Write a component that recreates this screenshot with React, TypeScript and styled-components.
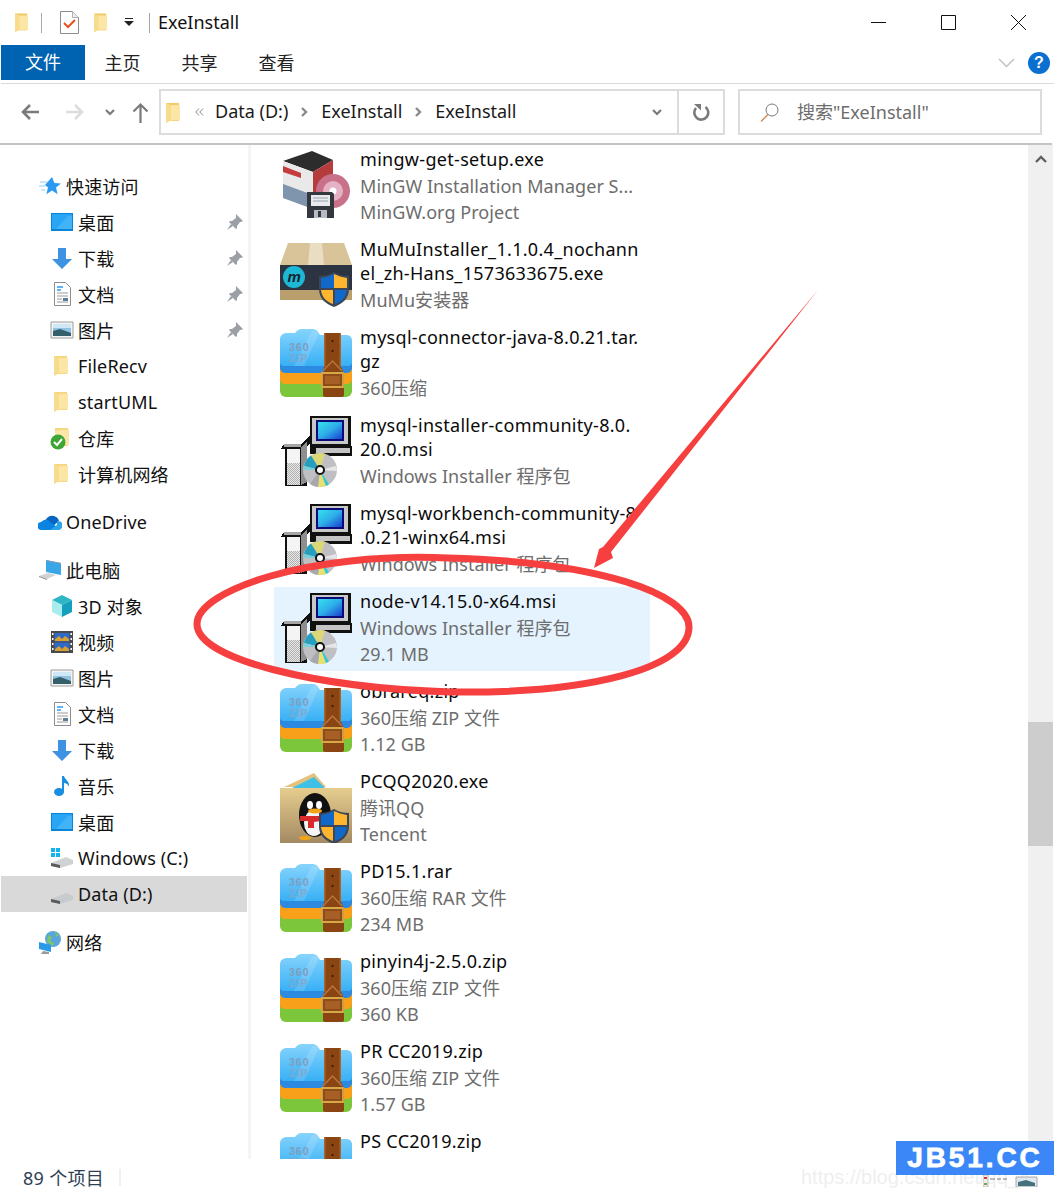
import React, { FC } from "react";
import styled, { createGlobalStyle } from "styled-components";

const GlobalStyle = createGlobalStyle`
  html, body {
    margin: 0;
    padding: 0;
    background: #fff;
  }
  body {
    font-family: "Noto Sans", "Noto Sans CJK SC", sans-serif;
    color: #111;
  }
`;

const Window = styled.div`
  position: relative;
  width: 1054px;
  height: 1195px;
  display: flex;
  flex-direction: column;
  overflow: hidden;
  background: #fff;
`;

/* ---------- title bar ---------- */

const TitleBar = styled.div`
  height: 45px;
  flex: none;
  display: flex;
  align-items: center;
  padding-left: 15px;
`;

const TitleIcon = styled.span<{ $gap: number }>`
  display: flex;
  margin-right: ${(p) => p.$gap}px;
`;

const TitleSep = styled.span<{ $gap: number }>`
  width: 1px;
  height: 20px;
  background: #a8a8a8;
  margin-right: ${(p) => p.$gap}px;
`;

const Title = styled.span`
  font-size: 18px;
  line-height: 45px;
  margin-right: auto;
`;

const WinButtons = styled.div`
  display: flex;
  align-items: center;
  padding-right: 28px;
  gap: 55px;
`;

/* ---------- ribbon ---------- */

const Ribbon = styled.div`
  height: 38px;
  flex: none;
  margin-left: 1px;
  display: flex;
  align-items: flex-start;
  border-bottom: 1px solid #dadada;
`;

const FileTab = styled.div`
  width: 84px;
  height: 35px;
  margin-right: -1px;
  background: #0063b1;
  color: #fff;
  font-size: 18px;
  line-height: 34px;
  text-align: center;
`;

const RibbonTab = styled.div`
  width: 77px;
  height: 35px;
  font-size: 18px;
  line-height: 36px;
  text-align: center;
  color: #222;
`;

const RibbonRight = styled.div`
  margin-left: auto;
  height: 36px;
  padding-right: 4px;
  display: flex;
  align-items: center;
  gap: 13px;
  box-sizing: border-box;
`;

const Help = styled.div`
  width: 22px;
  height: 22px;
  border-radius: 50%;
  background: #0a6fd0;
  color: #fff;
  font: bold 16px/22px "Liberation Sans", sans-serif;
  text-align: center;
`;

/* ---------- address bar ---------- */

const NavBar = styled.div`
  height: 61px;
  flex: none;
  margin: 0 2px 0 0;
  box-sizing: border-box;
  display: flex;
  align-items: center;
  border-bottom: 2px solid #c4c4c4;
  padding-bottom: 3px;
`;

const NavButtons = styled.div`
  width: 159px;
  flex: none;
  display: flex;
  align-items: center;
  padding-left: 20px;
  box-sizing: border-box;
`;

const NavGap = styled.span<{ $w: number }>`
  width: ${(p) => p.$w}px;
`;

const AddressBox = styled.div`
  width: 566px;
  height: 46px;
  flex: none;
  box-sizing: border-box;
  border: 2px solid #dcdcdc;
  display: flex;
  align-items: center;
  padding-left: 5px;
  font-size: 18px;
`;

const CrumbMore = styled.svg`
  margin: 0 11px 0 14px;
`;

const Crumb = styled.span`
  color: #1a1a1a;
  margin-bottom: 2px;
`;

const CrumbArrow = styled.span`
  display: flex;
  margin: 0 13px;
`;

const AddressEnd = styled.div`
  margin-left: auto;
  display: flex;
  align-items: center;
  height: 100%;
`;

const RefreshCell = styled.div`
  width: 46px;
  height: 100%;
  margin-left: 13px;
  border-left: 2px solid #dcdcdc;
  box-sizing: border-box;
  display: flex;
  align-items: center;
  justify-content: center;
`;

const SearchBox = styled.div`
  width: 304px;
  height: 46px;
  flex: none;
  margin-left: 13px;
  box-sizing: border-box;
  border: 2px solid #dcdcdc;
  display: flex;
  align-items: center;
  padding-left: 20px;
  gap: 18px;
  font-size: 18px;
  color: #6d6d6d;
`;

const SearchText = styled.span`
  margin-bottom: 3px;
`;

/* ---------- main area ---------- */

const Body = styled.div`
  flex: 1;
  min-height: 0;
  display: flex;
`;

const Sidebar = styled.nav`
  width: 251px;
  flex: none;
  box-sizing: border-box;
  padding: 23px 0 0 1px;
  border-right: 3px solid #f5f5f5;
`;

const NavGroup = styled.div`
  margin-bottom: 12px;
`;

const NavItem = styled.div<{ $sub?: boolean; $selected?: boolean }>`
  width: 246px;
  height: 36px;
  box-sizing: border-box;
  display: flex;
  align-items: center;
  padding: 0 4px 0 ${(p) => (p.$sub ? 49 : 37)}px;
  gap: 4px;
  font-size: 18px;
  letter-spacing: 0.15px;
  white-space: nowrap;
  background: ${(p) => (p.$selected ? "#d9d9d9" : "transparent")};
`;

const NavIconBox = styled.span`
  width: 24px;
  height: 24px;
  flex: none;
  display: flex;
`;

const PinBox = styled.span`
  display: flex;
  margin-left: auto;
`;

const FileList = styled.div`
  flex: 1;
  min-width: 0;
  overflow: hidden;
  padding-left: 23px;
  display: flex;
  flex-direction: column;
  gap: 6px;
`;

const FileRow = styled.div<{ $selected?: boolean }>`
  width: 376px;
  min-height: 82px;
  flex: none;
  box-sizing: border-box;
  display: flex;
  align-items: center;
  gap: 8px;
  padding: 2px 0 4px 6px;
  background: ${(p) => (p.$selected ? "#e5f3ff" : "transparent")};
`;

const FileThumb = styled.span`
  width: 72px;
  height: 72px;
  flex: none;
  display: flex;
  align-items: center;
  justify-content: center;
`;

const FileText = styled.div`
  min-width: 0;
  align-self: flex-start;
  white-space: nowrap;
`;

const FileName = styled.div`
  font-size: 18px;
  line-height: 24px;
  letter-spacing: 0.3px;
  color: #0a0a0a;
`;

const FileMeta = styled.div`
  font-size: 18px;
  line-height: 26px;
  letter-spacing: 0.05px;
  color: #6d6d6d;
  ${FileName} + & {
    margin-top: 2px;
  }
`;

const ScrollTrack = styled.div`
  width: 25px;
  flex: none;
  margin-right: 1px;
  background: #f0f0f0;
  display: flex;
  flex-direction: column;
  align-items: center;
  padding-top: 10px;
  box-sizing: border-box;
`;

const ScrollThumb = styled.div`
  width: 25px;
  height: 124px;
  margin-top: 559px;
  background: #cdcdcd;
`;

const StatusBar = styled.div`
  height: 36px;
  flex: none;
  display: flex;
  align-items: center;
  padding-left: 23px;
  font-size: 18px;
  letter-spacing: 0.3px;
  color: #2e3f55;
`;

const StatusSep = styled.span`
  width: 2px;
  height: 17px;
  margin-left: 15px;
  background: #f0f0f0;
`;

/* ---------- things lying over the window ---------- */

const Annotation = styled.svg`
  position: absolute;
  left: 0;
  top: 0;
  pointer-events: none;
`;

const Watermark = styled.div`
  position: absolute;
  left: 801px;
  top: 1164px;
  font: 20px/26px "Liberation Sans", sans-serif;
  color: #efefef;
  white-space: nowrap;
`;

const WatermarkIcons = styled.svg`
  position: absolute;
  left: 983px;
  top: 1175px;
`;

const Badge = styled.div`
  position: absolute;
  left: 896px;
  top: 1141px;
  width: 158px;
  height: 34px;
  background: #3b87f7;
  color: #fff;
  font: bold 28px/34px "Liberation Sans", sans-serif;
  letter-spacing: 2.9px;
  text-align: center;
  -webkit-text-stroke: 0.8px #fff;
`;

/* ---------- small drawings ---------- */

const FolderIcon: FC<{ w?: number; h?: number }> = ({ w = 15, h = 21 }) => (
  <svg width={w} height={h} viewBox="0 0 15 21">
    <path d="M0 1h13v18H0z" fill="#f5d77f" />
    <path d="M0 1h13v3H0z" fill="#f0c968" />
    <path d="M0 4l5-1h9v15H5l-5 3z" fill="#fbe6a5" />
    <path d="M0 1v20l5-3V3z" fill="#f7dc8c" />
  </svg>
);

const ChecklistIcon: FC = () => (
  <svg width="19" height="23" viewBox="0 0 19 23">
    <path d="M.5.5h12l6 6v16H.5z" fill="#fff" stroke="#8c8c8c" />
    <path d="M12.5.5v6h6" fill="#eee" stroke="#b0b0b0" />
    <path d="M4 12l4 4 7-7" fill="none" stroke="#e8501e" strokeWidth="2" />
  </svg>
);

const DropIcon: FC = () => (
  <svg width="10" height="9" viewBox="0 0 10 9">
    <path d="M1 .5h8" stroke="#222" />
    <path d="M0 3h10L5 8z" fill="#222" />
  </svg>
);

const ArrowIcon: FC<{ dir: "left" | "right"; color: string }> = ({ dir, color }) => (
  <svg width="20" height="18" viewBox="0 0 20 18">
    <path
      d={dir === "left" ? "M19 9H3M10 2L3 9l7 7" : "M1 9h16M10 2l7 7-7 7"}
      fill="none"
      stroke={color}
      strokeWidth="2.6"
    />
  </svg>
);

const UpIcon: FC = () => (
  <svg width="17" height="21" viewBox="0 0 17 21">
    <path d="M8.5 21V3M1.5 9.5l7-7 7 7" fill="none" stroke="#7a7a7a" strokeWidth="2.2" />
  </svg>
);

const SmallChevron: FC<{ color?: string; w?: number }> = ({ color = "#7a7a7a", w = 10 }) => (
  <svg width={w} height="7" viewBox="0 0 10 7">
    <path d="M1 1l4 4 4-4" fill="none" stroke={color} strokeWidth="2.2" />
  </svg>
);

const CrumbChevron: FC = () => (
  <svg width="7" height="10" viewBox="0 0 7 10">
    <path d="M1 1l4 4-4 4" fill="none" stroke="#8a8a8a" strokeWidth="2.4" />
  </svg>
);

const PinIcon: FC = () => (
  <svg width="16" height="17" viewBox="0 0 16 17">
    <path d="M9 0l7 7-2 1-1 0-3 4v2l-1 1-7-7 1-1h2l4-3V1z" fill="#9aa0a6" />
    <path d="M4 10L0 16l6-4z" fill="#9aa0a6" />
  </svg>
);

type NavIconName =
  | "star" | "desktop" | "down" | "doc" | "pic" | "folder" | "repo" | "cloud"
  | "pc" | "cube" | "video" | "music" | "winDrive" | "drive" | "net";

const NavIcon: FC<{ name: NavIconName }> = ({ name }) => {
  const shapes: Record<NavIconName, React.ReactNode> = {
    star: (
      <>
        <path d="M14 3l2.4 6 6.6.4-5 4.2 1.6 6.6-5.600-3.600-5.600 3.600 1.600-6.600-3-2.600z" fill="#2b9af3" />
        <path d="M2 8h7M1 12h6M3 16h4" stroke="#8fd0fa" strokeWidth="1.2" />
      </>
    ),
    desktop: (
      <>
        <path d="M1 3h22v18H1z" fill="#0a84d8" />
        <path d="M2 4h20v15H2z" fill="#2ba6f7" />
        <path d="M6 19L18 6h4v13z" fill="#53bcfa" opacity=".6" />
      </>
    ),
    down: <path d="M8 2h8v11h6l-10 10L2 13h6z" fill="#3e92e2" />,
    doc: (
      <>
        <path d="M4.5.5h11l5 5v18h-16z" fill="#fff" stroke="#8c8c8c" />
        <path d="M7 5h6M7 8h4" stroke="#2b9af3" strokeWidth="1.4" />
        <path d="M7 11h11M7 14h11M7 17h5M7 20h11" stroke="#9a9a9a" />
        <path d="M13 16h5v3h-5z" fill="#5a7f9a" />
      </>
    ),
    pic: (
      <>
        <path d="M1 4h22v16H1z" fill="#f4f4f4" stroke="#9c9c9c" />
        <path d="M3 6h18v12H3z" fill="#8fc3e0" />
        <path d="M3 13l7-2 11 4v3H3z" fill="#355f6a" />
        <path d="M3 6h18v4H3z" fill="#cfe8f5" />
      </>
    ),
    folder: (
      <g transform="translate(4 1)">
        <path d="M0 1h13v18H0z" fill="#f5d77f" />
        <path d="M0 4l5-1h9v15H5l-5 3z" fill="#fbe6a5" />
        <path d="M0 1v20l5-3V3z" fill="#f7dc8c" />
      </g>
    ),
    repo: (
      <>
        <g transform="translate(5 1)">
          <path d="M0 1h13v18H0z" fill="#f5d77f" />
          <path d="M0 4l5-1h9v15H5l-5 3z" fill="#fbe6a5" />
        </g>
        <circle cx="8" cy="16" r="7.5" fill="#3fa535" />
        <path d="M4 16l3 3 5-6" fill="none" stroke="#fff" strokeWidth="2" />
      </>
    ),
    cloud: (
      <>
        <path d="M9 8a7 7 0 0 1 12 3l-7 6-8-5z" fill="#0a64c4" />
        <path d="M6 10a5 5 0 0 1 5 1l8 6-5 3H4a4 4 0 0 1-1-8z" fill="#0a84e0" />
        <path d="M19 11a4 4 0 0 1 2 9h-9l7-5z" fill="#2aa4ea" />
      </>
    ),
    pc: (
      <>
        <path d="M8 2l15 3v12l-15-3z" fill="#3aa6ea" />
        <path d="M8 2l15 3v1L8 3z" fill="#8a9aa6" />
        <path d="M1 18l9-3 8 2-9 4z" fill="#cfd3d6" />
        <path d="M1 18l8 3v1l-8-3z" fill="#8e9296" />
      </>
    ),
    cube: (
      <>
        <path d="M12 1l10 5-10 5L2 6z" fill="#2fb6c6" />
        <path d="M2 6l10 5v12L2 18z" fill="#a8ecee" />
        <path d="M22 6l-10 5v12l10-5z" fill="#14a0bc" />
      </>
    ),
    video: (
      <>
        <path d="M1 1h22v22H1z" fill="#4a4a4a" />
        <path d="M4.5 3h15v8.500h-15zM4.500 12.500h15V21h-15z" fill="#2f6ac8" />
        <path d="M5 9l4-3 3 3 3-3 4 3v2H5zM5 19l4-3 3 3 3-3 4 3v2H5z" fill="#d8a030" />
        <path d="M2 3h1.500v2H2zM2 8h1.500v2H2zM2 13h1.500v2H2zM2 18h1.500v2H2zM20.500 3H22v2h-1.500zM20.500 8H22v2h-1.500zM20.500 13H22v2h-1.500zM20.500 18H22v2h-1.500z" fill="#fff" />
      </>
    ),
    music: (
      <>
        <ellipse cx="9" cy="18" rx="5" ry="4" fill="#1a8ee0" />
        <path d="M12 2h2c1 4 6 5 5 11-1-3-3-4-5-4v9h-2z" fill="#1a8ee0" />
      </>
    ),
    winDrive: (
      <>
        <path d="M1 2h4v4H1zM6 2h4v4H6zM1 7h4v4H1zM6 7h4v4H6z" fill="#12b4f0" />
        <path d="M1 17l15-6 7 3v4l-13 4-9-2z" fill="#d0d3d6" />
        <path d="M1 17l9 2v3l-9-2z" fill="#5a5a5a" />
      </>
    ),
    drive: (
      <>
        <path d="M1 17l15-6 7 3v4l-13 4-9-2z" fill="#c8cbce" />
        <path d="M1 17l9 2v3l-9-2z" fill="#5a5a5a" />
      </>
    ),
    net: (
      <>
        <circle cx="15" cy="9" r="8" fill="#5aa6d8" />
        <path d="M10 5l4 2-2 4 4 2-1 3-6-4zM17 2l4 3-3 2z" fill="#7fc56a" />
        <path d="M1 12l12 3v7l-12-3z" fill="#2a9ae8" />
        <path d="M5 21l6 1v2H3z" fill="#9a9a9a" />
      </>
    ),
  };
  return (
    <svg width="24" height="24" viewBox="0 0 24 24">
      {shapes[name]}
    </svg>
  );
};

const ZipIcon: FC = () => (
  <svg width="72" height="68" viewBox="0 0 72 68">
    <defs>
      <linearGradient id="zipTop" x1="0" y1="0" x2="0" y2="1">
        <stop offset="0" stopColor="#86d4fd" />
        <stop offset="1" stopColor="#38b0f5" />
      </linearGradient>
    </defs>
    <path d="M0 48h72v14a6 6 0 0 1-6 6H6a6 6 0 0 1-6-6z" fill="#7cc63c" />
    <path d="M0 38h72v13c0 2-2 4-5 4H5c-3 0-5-2-5-4z" fill="#f9a01b" />
    <path d="M0 28h72v11c0 2-2 5-5 5H5c-3 0-5-3-5-5z" fill="#2c8be0" />
    <path d="M0 11C0 6 3 4 7 4h8c3-4 5-4 9-4h8c4 0 6 2 8 6h26c4 0 6 2 6 6v22c0 2-2 3-4 3H4c-2 0-4-1-4-3z" fill="url(#zipTop)" />
    <path d="M14 37L32 2h8L24 37z" fill="#fff" opacity=".14" />
    <text x="9" y="22" fontFamily="Liberation Sans, sans-serif" fontWeight="700" fontSize="10.500" fill="#7f9dc0" letterSpacing="1">360</text>
    <text x="9" y="33" fontFamily="Liberation Sans, sans-serif" fontWeight="700" fontSize="10.500" fill="#7fa8cc" letterSpacing="1">ZIP</text>
    <path d="M44 4h17v34l3 6v22c0 1-1 2-2 2H45c-1 0-2-1-2-2V44l1-6z" fill="#8a4513" />
    <path d="M44 4h1.500v34H44zM59.500 4H61v34h-1.500z" fill="#a9642a" />
    <path d="M43 42l9.500-10L62 42" fill="none" stroke="#b9763a" strokeWidth="1.400" />
    <circle cx="52.500" cy="12" r="1" fill="#2a1505" />
    <circle cx="52.500" cy="22" r="1" fill="#2a1505" />
    <path d="M42 44h21v14H42z" fill="#8f4c18" stroke="#d5a848" strokeWidth="1.800" />
    <path d="M45 47h15v8H45z" fill="#a65f24" />
  </svg>
);

const InstallerIcon: FC = () => (
  <svg width="72" height="71" viewBox="0 0 72 71" shapeRendering="crispEdges">
    <defs>
      <linearGradient id="msiScreen" x1="0" y1="0" x2="1" y2="1">
        <stop offset="0" stopColor="#35e0ee" />
        <stop offset="0.5" stopColor="#2eaee8" />
        <stop offset="1" stopColor="#1a40d0" />
      </linearGradient>
      <pattern id="msiDither" width="2" height="2" patternUnits="userSpaceOnUse">
        <path d="M0 0h2v2H0z" fill="#e8e8e8" />
        <path d="M0 0h1v1H0zM1 1h1v1H1z" fill="#b0b0b0" />
      </pattern>
    </defs>
    <path d="M4 28h17l9-8h3v4l-6 6v40H5V33H1z" fill="#111" />
    <path d="M7 33h13v36H7z" fill="#f4f4f4" />
    <path d="M7 47h13v22H7z" fill="url(#msiDither)" />
    <path d="M21 31l6-5v40l-6 3z" fill="#8e8e8e" />
    <path d="M4 28h17v3H4z" fill="#a6a6a6" />
    <path d="M30 0h41v38H30z" fill="#111" />
    <path d="M32 2h36v26H32z" fill="#c8c8c8" />
    <path d="M36 4h28v21H36z" fill="#0a0a78" />
    <path d="M38 6h24v17H38z" fill="url(#msiScreen)" />
    <path d="M34 30h38v10H34z" fill="#111" />
    <path d="M36 32h34v5H36z" fill="#c4c4c4" />
    <g shapeRendering="auto">
      <circle cx="40" cy="54" r="17" fill="#c0c0c4" />
      <path d="M40 54L31 39.500A17 17 0 0 1 45 37.700z" fill="#dcd878" />
      <path d="M40 54L24 50a17 17 0 0 1 7-10.500z" fill="#27a0c0" />
      <path d="M40 54l-16-4a17 17 0 0 0-1 4z" fill="#7ad0d8" />
      <path d="M40 54l6 16a17 17 0 0 1-8 1z" fill="#e8e070" />
      <path d="M40 54l9 14.500a17 17 0 0 1-3 1.500z" fill="#30c8d0" />
      <path d="M40 54l16-4a17 17 0 0 1 1 5z" fill="#e6e6e6" />
      <path d="M40 54l-10 14a17 17 0 0 0 8 3z" fill="#a8a8ac" />
      <circle cx="40" cy="54" r="4" fill="#fff" stroke="#111" strokeWidth="2" />
    </g>
  </svg>
);

const ShieldIcon: FC<{ x: number; y: number }> = ({ x, y }) => (
  <g transform={`translate(${x} ${y})`}>
    <path d="M15 0c5 3 10 4 15 4v13c0 10-7 15-15 18C7 32 0 27 0 17V4c5 0 10-1 15-4z" fill="#3c4656" />
    <path d="M15 2c4 2 8 3 13 4v10H15z" fill="#ffb52e" />
    <path d="M15 2v14H2V6c5-1 9-2 13-4z" fill="#1168c8" />
    <path d="M2 18h12v14C8 30 3 26 2 18z" fill="#ffb52e" />
    <path d="M16 18h12c-1 8-6 12-12 14z" fill="#1168c8" />
  </g>
);

const MingwIcon: FC = () => (
  <svg width="72" height="72" viewBox="0 0 72 72">
    <path d="M3 11L32 1l21 9-20 12z" fill="#2c2c2c" />
    <path d="M3 11l30 11v37L3 48z" fill="#e9e9e9" />
    <path d="M3 34l30 11v14L3 48z" fill="#7f94ad" />
    <path d="M33 22l20-12v34L33 59z" fill="#b43c3c" />
    <path d="M3 16l18 7v5L3 22z" fill="#c43c3c" />
    <circle cx="53" cy="41" r="17" fill="#c9708a" />
    <circle cx="53" cy="41" r="10" fill="#e4b2c4" />
    <circle cx="53" cy="41" r="3.500" fill="#fff" />
    <path d="M27 42h25l2 2v24H27z" fill="#33383e" />
    <path d="M31 45h19v11H31z" fill="#e8eaee" />
    <path d="M33 48h15M33 51h15" stroke="#9aa0aa" />
    <path d="M34 60h13v8H34z" fill="#b8bcc2" />
    <path d="M38 61h3v6h-3z" fill="#33383e" />
  </svg>
);

const MumuIcon: FC = () => (
  <svg width="72" height="64" viewBox="0 0 72 64">
    <path d="M8 0h56l8 22H0z" fill="#d9c49a" />
    <path d="M30 0h12l2 22H28z" fill="#e9ddc3" />
    <path d="M0 22h72v25H0z" fill="#2b3440" />
    <path d="M0 47h72v10H0z" fill="#b89f6d" />
    <circle cx="14" cy="34" r="11" fill="#1db8d6" />
    <text x="7.500" y="39" fontFamily="Liberation Sans, sans-serif" fontWeight="700" fontStyle="italic" fontSize="15" fill="#16222c">m</text>
    <ShieldIcon x={39} y={29} />
  </svg>
);

const QqIcon: FC = () => (
  <svg width="72" height="70" viewBox="0 0 72 70">
    <defs>
      <linearGradient id="qqBox" x1="0" y1="0" x2="0" y2="1">
        <stop offset="0" stopColor="#e6cd8e" />
        <stop offset="1" stopColor="#a48a62" />
      </linearGradient>
    </defs>
    <path d="M4 14L34 0l12 14z" fill="#e2c27c" />
    <path d="M10 16L34 4l12 12z" fill="#3fc0e6" />
    <path d="M0 15h72v55H0z" fill="url(#qqBox)" />
    <ellipse cx="35" cy="42" rx="16" ry="22" fill="#111" />
    <ellipse cx="34" cy="50" rx="10" ry="13" fill="#f4f4f4" />
    <ellipse cx="30" cy="32" rx="3" ry="4" fill="#fff" />
    <ellipse cx="39" cy="32" rx="3" ry="4" fill="#fff" />
    <ellipse cx="35" cy="38" rx="7" ry="2.500" fill="#f4a418" />
    <path d="M20 43h20l1 5-7 1v6h-6v-7h-8z" fill="#d82a2a" />
    <ellipse cx="25" cy="65" rx="6" ry="2" fill="#f4a418" />
    <ShieldIcon x={39} y={36} />
  </svg>
);

/* ---------- data ---------- */

interface FileEntry {
  name: string[];
  meta: string[];
  thumb: React.ReactNode;
  selected?: boolean;
}

const files: FileEntry[] = [
  { name: ["mingw-get-setup.exe"], meta: ["MinGW Installation Manager S...", "MinGW.org Project"], thumb: <MingwIcon /> },
  { name: ["MuMuInstaller_1.1.0.4_nochann", "el_zh-Hans_1573633675.exe"], meta: ["MuMu安装器"], thumb: <MumuIcon /> },
  { name: ["mysql-connector-java-8.0.21.tar.", "gz"], meta: ["360压缩"], thumb: <ZipIcon /> },
  { name: ["mysql-installer-community-8.0.", "20.0.msi"], meta: ["Windows Installer 程序包"], thumb: <InstallerIcon /> },
  { name: ["mysql-workbench-community-8", ".0.21-winx64.msi"], meta: ["Windows Installer 程序包"], thumb: <InstallerIcon /> },
  { name: ["node-v14.15.0-x64.msi"], meta: ["Windows Installer 程序包", "29.1 MB"], thumb: <InstallerIcon />, selected: true },
  { name: ["obrareq.zip"], meta: ["360压缩 ZIP 文件", "1.12 GB"], thumb: <ZipIcon /> },
  { name: ["PCQQ2020.exe"], meta: ["腾讯QQ", "Tencent"], thumb: <QqIcon /> },
  { name: ["PD15.1.rar"], meta: ["360压缩 RAR 文件", "234 MB"], thumb: <ZipIcon /> },
  { name: ["pinyin4j-2.5.0.zip"], meta: ["360压缩 ZIP 文件", "360 KB"], thumb: <ZipIcon /> },
  { name: ["PR CC2019.zip"], meta: ["360压缩 ZIP 文件", "1.57 GB"], thumb: <ZipIcon /> },
  { name: ["PS CC2019.zip"], meta: [], thumb: <ZipIcon /> },
];

interface NavEntry {
  label: string;
  icon: NavIconName;
  sub?: boolean;
  pinned?: boolean;
  selected?: boolean;
}

const navGroups: NavEntry[][] = [
  [
    { label: "快速访问", icon: "star" },
    { label: "桌面", icon: "desktop", sub: true, pinned: true },
    { label: "下载", icon: "down", sub: true, pinned: true },
    { label: "文档", icon: "doc", sub: true, pinned: true },
    { label: "图片", icon: "pic", sub: true, pinned: true },
    { label: "FileRecv", icon: "folder", sub: true },
    { label: "startUML", icon: "folder", sub: true },
    { label: "仓库", icon: "repo", sub: true },
    { label: "计算机网络", icon: "folder", sub: true },
  ],
  [{ label: "OneDrive", icon: "cloud" }],
  [
    { label: "此电脑", icon: "pc" },
    { label: "3D 对象", icon: "cube", sub: true },
    { label: "视频", icon: "video", sub: true },
    { label: "图片", icon: "pic", sub: true },
    { label: "文档", icon: "doc", sub: true },
    { label: "下载", icon: "down", sub: true },
    { label: "音乐", icon: "music", sub: true },
    { label: "桌面", icon: "desktop", sub: true },
    { label: "Windows (C:)", icon: "winDrive", sub: true },
    { label: "Data (D:)", icon: "drive", sub: true, selected: true },
  ],
  [{ label: "网络", icon: "net" }],
];

const App: FC = () => (
  <Window>
    <GlobalStyle />
    <TitleBar>
      <TitleIcon $gap={12}><FolderIcon w={14} h={21} /></TitleIcon>
      <TitleSep $gap={18} />
      <TitleIcon $gap={15}><ChecklistIcon /></TitleIcon>
      <TitleIcon $gap={16}><FolderIcon w={14} h={21} /></TitleIcon>
      <TitleIcon $gap={15}><DropIcon /></TitleIcon>
      <TitleSep $gap={8} />
      <Title>ExeInstall</Title>
      <WinButtons>
        <svg width="15" height="15" viewBox="0 0 15 15"><path d="M0 7.500h15" stroke="#111" /></svg>
        <svg width="15" height="15" viewBox="0 0 15 15"><path d="M.5.5h14v14H.5z" fill="none" stroke="#111" /></svg>
        <svg width="15" height="15" viewBox="0 0 15 15"><path d="M0 0l15 15M15 0L0 15" stroke="#111" /></svg>
      </WinButtons>
    </TitleBar>

    <Ribbon>
      <FileTab>文件</FileTab>
      <RibbonTab>主页</RibbonTab>
      <RibbonTab>共享</RibbonTab>
      <RibbonTab>查看</RibbonTab>
      <RibbonRight>
        <svg width="17" height="10" viewBox="0 0 17 10"><path d="M1 1l7.500 7.500L16 1" fill="none" stroke="#c2c2c2" strokeWidth="1.500" /></svg>
        <Help>?</Help>
      </RibbonRight>
    </Ribbon>

    <NavBar>
      <NavButtons>
        <ArrowIcon dir="left" color="#7a7a7a" />
        <NavGap $w={25} />
        <ArrowIcon dir="right" color="#dcdcdc" />
        <NavGap $w={20} />
        <SmallChevron />
        <NavGap $w={17} />
        <UpIcon />
      </NavButtons>
      <AddressBox>
        <FolderIcon />
        <CrumbMore width="9" height="8" viewBox="0 0 9 8">
          <path d="M4 .5L.8 4 4 7.500M8 .5L4.800 4 8 7.500" fill="none" stroke="#8a8a8a" />
        </CrumbMore>
        <Crumb>Data (D:)</Crumb>
        <CrumbArrow><CrumbChevron /></CrumbArrow>
        <Crumb>ExeInstall</Crumb>
        <CrumbArrow><CrumbChevron /></CrumbArrow>
        <Crumb>ExeInstall</Crumb>
        <AddressEnd>
          <SmallChevron w={14} />
          <RefreshCell>
            <svg width="18" height="19" viewBox="0 0 18 19">
              <path d="M4 5a7 7 0 1 0 9.500-1" fill="none" stroke="#7a7a7a" strokeWidth="2.600" />
              <path d="M2 1h7v6.500z" fill="#7a7a7a" />
            </svg>
          </RefreshCell>
        </AddressEnd>
      </AddressBox>
      <SearchBox>
        <svg width="19" height="19" viewBox="0 0 19 19">
          <circle cx="12" cy="7" r="6" fill="none" stroke="#7a7a7a" />
          <path d="M8 11.500L1 18.500" stroke="#d08a50" strokeWidth="1.300" />
        </svg>
        <SearchText>搜索"ExeInstall"</SearchText>
      </SearchBox>
    </NavBar>

    <Body>
      <Sidebar>
        {navGroups.map((group, i) => (
          <NavGroup key={i}>
            {group.map((item) => (
              <NavItem key={item.label} $sub={item.sub} $selected={item.selected}>
                <NavIconBox><NavIcon name={item.icon} /></NavIconBox>
                {item.label}
                {item.pinned && <PinBox><PinIcon /></PinBox>}
              </NavItem>
            ))}
          </NavGroup>
        ))}
      </Sidebar>

      <FileList>
        {files.map((file) => (
          <FileRow key={file.name[0]} $selected={file.selected}>
            <FileThumb>{file.thumb}</FileThumb>
            <FileText>
              {file.name.map((line) => (
                <FileName key={line}>{line}</FileName>
              ))}
              {file.meta.map((line) => (
                <FileMeta key={line}>{line}</FileMeta>
              ))}
            </FileText>
          </FileRow>
        ))}
      </FileList>

      <ScrollTrack>
        <svg width="12" height="8" viewBox="0 0 12 8"><path d="M1 7l5-5 5 5" fill="none" stroke="#606060" strokeWidth="2.400" /></svg>
        <ScrollThumb />
      </ScrollTrack>
    </Body>

    <StatusBar>
      89 个项目
      <StatusSep />
    </StatusBar>

    <Watermark>https://blog.csdn.net/qq_4</Watermark>
    <WatermarkIcons width="58" height="12" viewBox="0 0 58 12">
      <path d="M0 0h5v12H0z" fill="#eee" stroke="#bbb" />
      <path d="M1 2h3v2H1z" fill="#d33" />
      <path d="M1 8h3v2H1z" fill="#7a3" />
      <path d="M7 4h5M14 4h4M20 4h4" stroke="#777" />
      <path d="M33 2h21v10H33z" fill="#dfe9ef" stroke="#aaa" />
      <path d="M35 7l8-2 9 3v3H35z" fill="#45707c" />
    </WatermarkIcons>
    <Badge>JB51.CC</Badge>

    <Annotation width="1054" height="1195" viewBox="0 0 1054 1195">
      <path
        d="M448 558C310 552 197 590 197 624C197 660 320 688 450 692C590 694 689 668 689 627C689 594 600 562 448 558Z"
        fill="none"
        stroke="#f64040"
        strokeWidth="7"
      />
      <path d="M818 290L611 552L613 558L594 568L599 549L603 547Z" fill="#f64040" />
    </Annotation>
  </Window>
);

export default App;
